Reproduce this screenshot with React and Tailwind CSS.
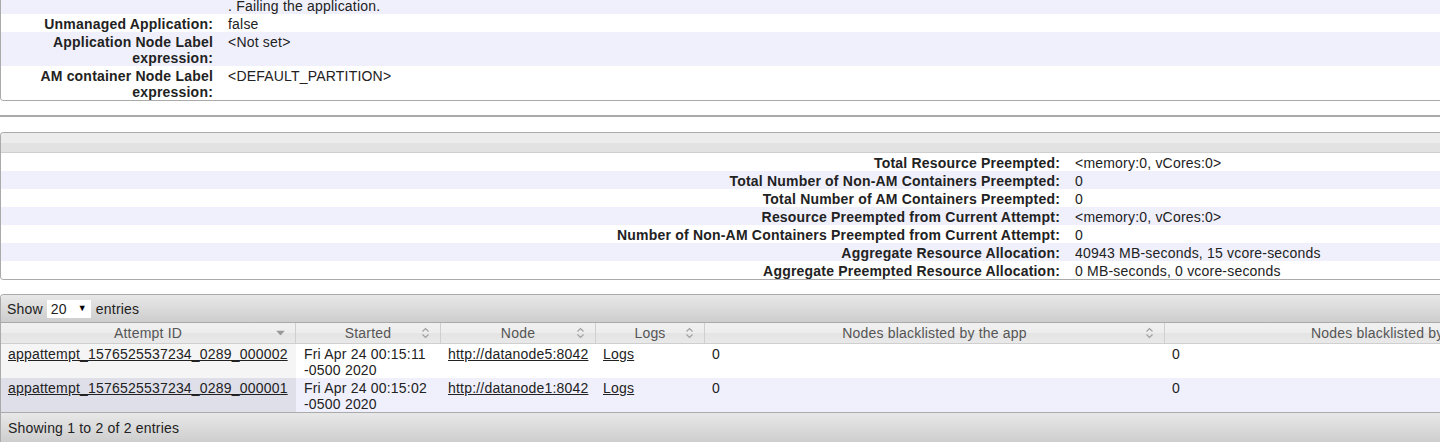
import React from "react";

const font = "font-['Liberation_Sans',Arial,sans-serif]";

const appRows = [
  { label: "", value: ". Failing the application.", alt: true },
  { label: "Unmanaged Application:", value: "false" },
  { label: "Application Node Label expression:", value: "<Not set>", alt: true },
  { label: "AM container Node Label expression:", value: "<DEFAULT_PARTITION>" },
];

const preemptRows = [
  ["Total Resource Preempted:", "<memory:0, vCores:0>"],
  ["Total Number of Non-AM Containers Preempted:", "0"],
  ["Total Number of AM Containers Preempted:", "0"],
  ["Resource Preempted from Current Attempt:", "<memory:0, vCores:0>"],
  ["Number of Non-AM Containers Preempted from Current Attempt:", "0"],
  ["Aggregate Resource Allocation:", "40943 MB-seconds, 15 vcore-seconds"],
  ["Aggregate Preempted Resource Allocation:", "0 MB-seconds, 0 vcore-seconds"],
];

const attempts = [
  {
    id: "appattempt_1576525537234_0289_000002",
    started: "Fri Apr 24 00:15:11 -0500 2020",
    node: "http://datanode5:8042",
  },
  {
    id: "appattempt_1576525537234_0289_000001",
    started: "Fri Apr 24 00:15:02 -0500 2020",
    node: "http://datanode1:8042",
  },
];

const cols = "grid grid-cols-[295px_145px_155px_109px_460px_1fr]";

function SortBoth() {
  return (
    <svg width="9" height="12" viewBox="0 0 9 12" className="shrink-0">
      <path d="M1.5 4.5 L4.5 1.5 L7.5 4.5" fill="none" stroke="#a0a0a0" strokeWidth="1.2" />
      <path d="M1.5 7.5 L4.5 10.5 L7.5 7.5" fill="none" stroke="#a0a0a0" strokeWidth="1.2" />
    </svg>
  );
}

function SortDesc() {
  return (
    <svg width="9" height="5" viewBox="0 0 9 5" className="shrink-0">
      <path d="M0 0 H9 L4.5 5 Z" fill="#999" />
    </svg>
  );
}

function HeadCell({ children, sort }) {
  return (
    <div className="relative flex items-center justify-center h-[20px] border-r border-[#cfcfcf] bg-[linear-gradient(#f0f0f0_0%,#ededed_50%,#e4e4e4_51%,#e9e9e9_100%)]">
      <span className="text-[#555]">{children}</span>
      {sort && (
        <span className="absolute right-[10px] top-1/2 -translate-y-1/2 flex">
          {sort === "desc" ? <SortDesc /> : <SortBoth />}
        </span>
      )}
    </div>
  );
}

export default function App() {
  return (
    <div className={`w-[1440px] h-[442px] overflow-hidden bg-white text-[14px] leading-[16px] tracking-[0.2px] text-[#222] ${font}`}>
      {/* Application info block */}
      <div className="-mt-[4px] border-l border-b border-[#aaa] rounded-bl-[4px] overflow-hidden">
        {appRows.map((r, i) => (
          <div key={i} className={`flex pt-[2px] ${r.alt ? "bg-[#f0f0fc]" : "bg-white"}`}>
            <div className="w-[219px] shrink-0 text-right font-bold pl-[36px] pr-[7px]">{r.label}</div>
            <div className="pl-[8px]">{r.value}</div>
          </div>
        ))}
      </div>

      <div className="mt-[14px] h-[2px] bg-[#aaa]" />

      {/* Preemption block */}
      <div className="mt-[15px] border-t border-l border-b border-[#aaa] rounded-tl-[4px] rounded-bl-[4px] overflow-hidden">
        <div className="h-[20px] border-b border-[#cfcfcf] bg-[linear-gradient(#ececec_0%,#ececec_50%,#e2e2e2_51%,#e2e2e2_100%)]" />
        {preemptRows.map(([k, v], i) => (
          <div key={i} className={`flex pt-[2px] ${i % 2 ? "bg-[#f0f0fc]" : "bg-white"}`}>
            <div className="w-[1066px] shrink-0 text-right font-bold pr-[7px]">{k}</div>
            <div className="pl-[8px]">{v}</div>
          </div>
        ))}
      </div>

      {/* Attempts table */}
      <div className="mt-[14px] border-t border-l border-[#aaa] rounded-tl-[4px] overflow-hidden">
        <div className="h-[28px] flex items-center pl-[6px] border-b border-[#aaa] bg-[linear-gradient(#e8e8e8,#cdcdcd)]">
          <span>Show</span>
          <span className="ml-[4px] w-[44px] h-[18px] bg-white flex items-center pl-[4px] pr-[4px] justify-between">
            <span>20</span>
            <span className="text-[9px] leading-none text-black">▼</span>
          </span>
          <span className="ml-[5px]">entries</span>
        </div>

        <div className={`${cols} border-b border-[#cfcfcf]`}>
          <HeadCell sort="desc">Attempt ID</HeadCell>
          <HeadCell sort="both">Started</HeadCell>
          <HeadCell sort="both">Node</HeadCell>
          <HeadCell sort="both">Logs</HeadCell>
          <HeadCell sort="both">Nodes blacklisted by the app</HeadCell>
          <div className="flex items-center h-[20px] pl-[146px] bg-[linear-gradient(#f0f0f0_0%,#ededed_50%,#e4e4e4_51%,#e9e9e9_100%)]">
            <span className="text-[#555] whitespace-nowrap">Nodes blacklisted by the system</span>
          </div>
        </div>

        {attempts.map((a, i) => (
          <div key={a.id} className={`${cols} ${i % 2 ? "bg-[#f0f0fc]" : "bg-white"}`}>
            <div className={`pl-[7px] pt-[2px] whitespace-nowrap ${i % 2 ? "bg-[#dfdfea]" : "bg-[#f5f5f5]"}`}>
              <a href="#" className="underline text-[#222]">{a.id}</a>
            </div>
            <div className="pl-[8px] pr-[2px] pt-[2px]">{a.started}</div>
            <div className="pl-[7px] pt-[2px] whitespace-nowrap">
              <a href="#" className="underline text-[#222]">{a.node}</a>
            </div>
            <div className="pl-[7px] pt-[2px]">
              <a href="#" className="underline text-[#222]">Logs</a>
            </div>
            <div className="pl-[7px] pt-[2px] h-[34px]">0</div>
            <div className="pl-[7px] pt-[2px]">0</div>
          </div>
        ))}

        <div className="h-[31px] flex items-center pl-[7px] border-t border-[#aaa] bg-[linear-gradient(#e8e8e8,#cdcdcd)]">
          Showing 1 to 2 of 2 entries
        </div>
      </div>
    </div>
  );
}
